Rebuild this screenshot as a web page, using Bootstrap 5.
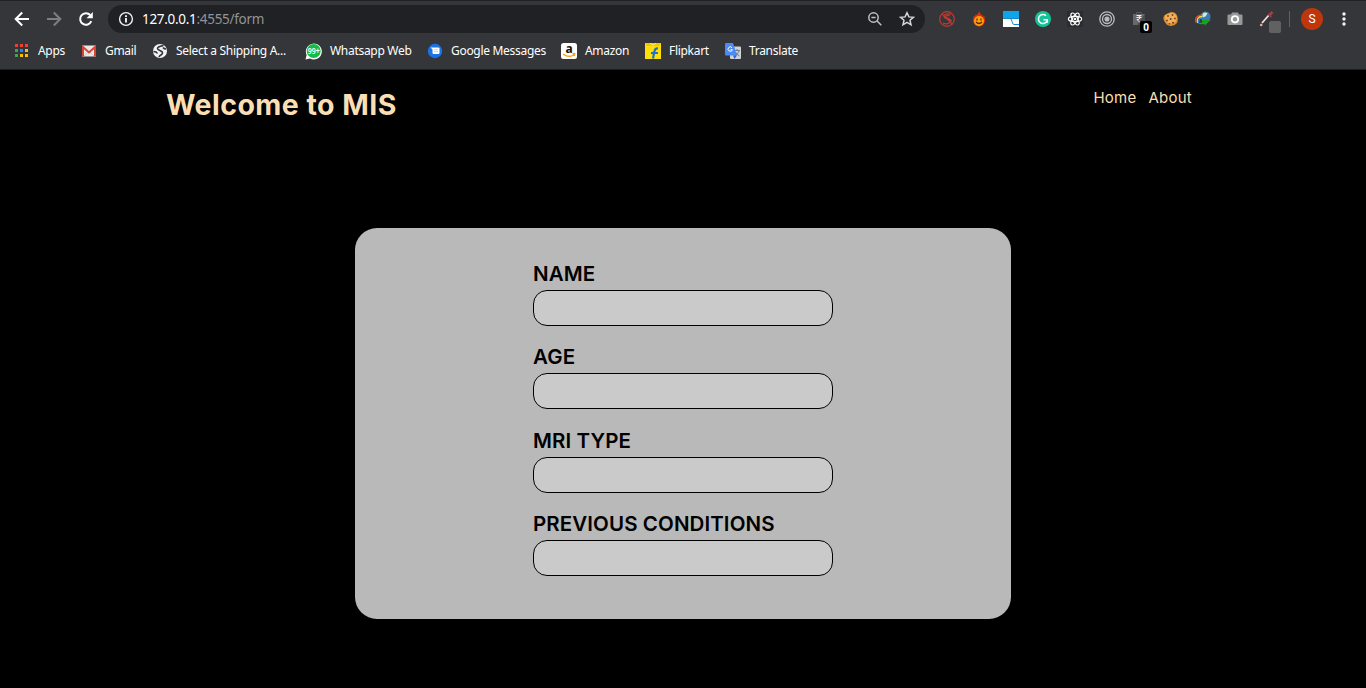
<!DOCTYPE html>
<html lang="en">
<head>
<meta charset="utf-8">
<meta name="viewport" content="width=device-width, initial-scale=1">
<title>MIS</title>
<link href="https://cdn.jsdelivr.net/npm/bootstrap@5.3.0/dist/css/bootstrap.min.css" rel="stylesheet">
<style>
  body { background: #000; height: 688px; overflow: hidden; font-family: Inter, "Liberation Sans", sans-serif; }
  svg { display: block; flex-shrink: 0; }
  .browser { height: 70px; background: #35363a; border-bottom: 1px solid #1d1e20; font-family: "Noto Sans", "Open Sans", sans-serif; }
  .toolbar { height: 37px; border-top: 1px solid #202124; padding-left: 6px; }
  .cell { width: 32px; height: 36px; display: flex; align-items: center; justify-content: center; flex-shrink: 0; position: relative; }
  .omnibox { width: 817px; height: 28px; background: #202124; border-radius: 14px; margin-left: 6px; padding-left: 10px; padding-right: 2px; }
  .url { font-size: 13.5px; letter-spacing: -.3px; color: #919497; margin-left: 8px; line-height: 20px; }
  .url span { color: #fff; }
  .extensions { margin-left: 6px; }
  .counter { position: absolute; left: 17px; top: 20px; width: 12px; height: 12px; background: #000; border-radius: 2px; color: #fff; font: bold 10px/12px "Noto Sans", sans-serif; text-align: center; }
  .divider { width: 1px; height: 16px; background: #606165; margin-left: 6px; }
  .avatar { width: 22px; height: 22px; margin-left: 11px; background: #bf360c; color: #fff; font: 12px/22px Roboto, sans-serif; text-align: center; }
  .bookmarks { display: grid; grid-template-columns: 68px 71px 153px 122px 134px 84px 80px 90px; padding-left: 13px; height: 28px; align-items: center; color: #fff; font-size: 12px; }
  .bookmarks > div { display: flex; align-items: center; gap: 8px; white-space: nowrap; }
  .bookmarks span { letter-spacing: -.3px; }
  .masthead { height: 158px; padding: 15px 174px 0 166px; color: #f9dfb3; }
  .site-title { font-size: 28.5px; font-weight: 650; line-height: 40px; margin: 0; letter-spacing: .45px; }
  .site-links { gap: 12px; line-height: 26px; font-size: 15px; letter-spacing: .25px; }
  .site-links a { color: inherit; text-decoration: none; }
  .panel { width: 656px; height: 391px; margin: 0 auto; border-radius: 22px; background: #b9b9b9; padding-top: 30px; }
  .field { width: 300px; height: 83.4px; margin: 0 auto; }
  .field label { display: block; height: 32px; line-height: 31px; font-size: 20.5px; letter-spacing: .1px; font-weight: 600; color: #000; white-space: nowrap; }
  .field input { width: 300px; height: 36px; display: block; border: 1px solid #000; border-radius: 14px; background: #cacaca; padding: 0 12px; }
</style>
</head>
<body>
<header class="browser">
  <div class="toolbar d-flex align-items-center">
    <div class="cell"><svg width="16" height="16" viewBox="0 0 16 16" fill="none" stroke="#fff" stroke-width="2"><path d="M15 8H2M8.2 1.5 1.7 8l6.5 6.5"/></svg></div>
    <div class="cell"><svg width="16" height="16" viewBox="0 0 16 16" fill="none" stroke="#7d7e81" stroke-width="2"><path d="M1 8h13M7.8 1.5 14.3 8l-6.5 6.5"/></svg></div>
    <div class="cell"><svg width="16" height="16" viewBox="0 0 16 16"><path d="M13.3 10.2A5.8 5.8 0 1 1 12.2 4" fill="none" stroke="#fff" stroke-width="2"/><path d="M14.8 1v6.3H8.5z" fill="#fff"/></svg></div>
    <div class="omnibox d-flex align-items-center">
      <svg width="16" height="16" viewBox="0 0 16 16"><circle cx="8" cy="8" r="6.4" fill="none" stroke="#f1f3f4" stroke-width="1.4"/><path d="M8 7v4.5M8 4.3v1.8" stroke="#fff" stroke-width="1.8"/></svg>
      <div class="url"><span>127.0.0.1</span>:4555/form</div>
      <div class="cell ms-auto"><svg width="16" height="16" viewBox="0 0 16 16" fill="none" stroke="#bdc1c6" stroke-width="1.5"><circle cx="6.5" cy="6.5" r="4.7"/><path d="M4.4 6.500h4.200M9.800 9.800l4.500 4.500"/></svg></div>
      <div class="cell"><svg width="16" height="16" viewBox="0 0 16 16"><path d="m8 1.800 1.900 4.100 4.500.4-3.400 3 1 4.500-4-2.400-4 2.400 1-4.500-3.400-3 4.500-.4z" fill="none" stroke="#d5d7da" stroke-width="1.500"/></svg></div>
    </div>
    <div class="extensions d-flex">
      <div class="cell"><svg width="16" height="16" viewBox="0 0 16 16" fill="none" stroke="#bd3b30" stroke-width="1.200"><circle cx="8" cy="8" r="7.300"/><path d="M12 3.500C8 2 4.500 3.500 5 6c.4 2 5.700 2 6 4.300.3 2.500-4 3.200-7 1.700M10.500 5C8.500 4 6.500 4.500 6.700 5.700c.2 1.500 5.800 2 5.800 4.800M3 2.800l10.500 10.500"/></svg></div>
      <div class="cell"><svg width="16" height="16" viewBox="0 0 16 16"><path d="M8 0c-.3 2-1 2.600-2 4L4.700 3.200 4 5.500 2.700 5 2 9c0 4 3 6.500 6 6.500s6-2.500 6-6.500l-.7-4-1.400.7-.7-2.500L10 4.500C10 2.500 8.800 1.800 8 0" fill="#e53009"/><ellipse cx="8" cy="10" rx="5" ry="5" fill="#ff9d0a"/><path d="M6 7.500v2M10 7.500v2M5 11q3 3 6 0" fill="none" stroke="#542000" stroke-width="1.200"/></svg></div>
      <div class="cell"><svg width="16" height="16" viewBox="0 0 16 16"><path fill="#0da4ea" d="M0 0h16v16H0z"/><path fill="#fff" d="M0 7h16v9H0z"/><path d="M0 7.500h16M7 7.500q1.500 0 2 3t2 3h5" fill="none" stroke="#138bcb"/></svg></div>
      <div class="cell"><svg width="16" height="16" viewBox="0 0 16 16"><circle cx="8" cy="8" r="8" fill="#15c39a"/><path d="M11 4.700A4.500 4.500 0 1 0 12 10M8.500 8.700h3.800v3" fill="none" stroke="#fff" stroke-width="1.500"/></svg></div>
      <div class="cell"><svg width="16" height="16" viewBox="0 0 16 16"><path fill="#2b2c2e" d="M0 0h16v16H0z"/><g fill="none" stroke="#fff" stroke-width="1.150"><ellipse cx="8" cy="8" rx="6.700" ry="2.600"/><ellipse cx="8" cy="8" rx="6.700" ry="2.600" transform="rotate(60 8 8)"/><ellipse cx="8" cy="8" rx="6.700" ry="2.600" transform="rotate(120 8 8)"/></g><circle cx="8" cy="8" r="1.300" fill="#fff"/></svg></div>
      <div class="cell"><svg width="16" height="16" viewBox="0 0 16 16" fill="none" stroke="#bbb" stroke-width="1.300"><circle cx="8" cy="8" r="7.200"/><circle cx="8" cy="8" r="4.500"/><circle cx="8" cy="8" r="1.900" fill="#bbb"/></svg></div>
      <div class="cell"><svg width="16" height="16" viewBox="0 0 16 16"><path d="M5.500 3V1.500h5V3" fill="none" stroke="#555"/><path fill="#686868" d="M2 3h12v11H2z"/><path d="M14 3v11H6z" fill="#4b4b4b"/><path d="M5.500 4.500h5M5.500 6.500h5M7 4.500q3 .5 2 2.500t-3 1.500l3 3" fill="none" stroke="#eee"/></svg><span class="counter">0</span></div>
      <div class="cell"><svg width="16" height="16" viewBox="0 0 16 16"><path d="M8 1q5 0 6.200 4T14 12q-2.500 3.200-6.500 3T1.200 10 3 3.200 8 1" fill="#dc8d32"/><path d="M8 2q4 0 5.300 3t-.6 5.500T7 12.500 2.200 8 4 3.400 8 2" fill="#eeb05d"/><g fill="#7b3e1c"><circle cx="5" cy="5" r=".9"/><circle cx="9.500" cy="4" r=".9"/><circle cx="12" cy="7.500" r=".9"/><circle cx="7.700" cy="8" r="1"/><circle cx="4" cy="9.500" r=".9"/><circle cx="10" cy="11.700" r="1"/><circle cx="6.500" cy="12.700" r=".8"/></g></svg></div>
      <div class="cell"><svg width="16" height="16" viewBox="0 0 16 16"><circle cx="10.500" cy="5.500" r="5" fill="#3d78bd"/><path d="M7.500 3q2.500-2.500 5-.5l-2 3-3 1z" fill="#dcecae"/><path d="M7 4C2 4-.5 7.500 1 11.500" fill="none" stroke="#e6452a" stroke-width="1.300"/><path d="M7 5.500C3 5.500 1.500 8.500 2.500 12" fill="none" stroke="#ffda32" stroke-width="1.300"/><path d="M7.500 7C4.500 7 3 9 3.800 12" fill="none" stroke="#348be0" stroke-width="1.200"/><path d="m16 8.500-6 6-.8-1.500Q5 14 2.500 12q4 .5 5-1.500L6.500 9z" fill="#11a522"/></svg></div>
      <div class="cell"><svg width="16" height="16" viewBox="0 0 16 16"><path d="M1.500 3.500H4l1-2h6l1 2h2.500q1 0 1 1V13q0 1-1 1h-13q-1 0-1-1V4.500q0-1 1-1" fill="#989898"/><circle cx="8" cy="8.300" r="3.200" fill="none" stroke="#fff" stroke-width="1.800"/></svg></div>
      <div class="cell"><svg width="16" height="16" viewBox="0 0 16 16"><path d="m3 12 7-8" stroke="#f3dddd" stroke-width="1.800"/><path d="m9 3 3.500 3" stroke="#9e3838" stroke-width="1.700"/><path d="m10.500 4 3-3" stroke="#a14343" stroke-width="2.600"/><circle cx="2.200" cy="14" r="1.300" fill="#e9a9a3"/></svg><svg class="position-absolute" style="left:18px;top:20px" width="12" height="12"><rect width="12" height="12" rx="2" fill="#616161"/></svg></div>
    </div>
    <div class="divider"></div>
    <div class="avatar rounded-circle">S</div>
    <svg class="ms-auto me-4" width="4" height="16" viewBox="0 0 4 16" fill="#f1f3f4" style="transform:translateX(4px)"><circle cx="2" cy="3" r="1.700"/><circle cx="2" cy="8" r="1.700"/><circle cx="2" cy="13" r="1.700"/></svg>
  </div>
  <div class="bookmarks">
    <div><svg width="17" height="16" viewBox="0 0 17 16"><path fill="#f33f32" d="M2 1h3v3H2zM7 1h3v3H7zM12 1h3v3h-3z"/><path fill="#3aa657" d="M2 6h3v3H2zM2 11h3v3H2z"/><path fill="#2186f3" d="M7 6h3v3H7z"/><path fill="#fbbc05" d="M12 6h3v3h-3zM7 11h3v3H7zM12 11h3v3h-3z"/></svg><span>Apps</span></div>
    <div><svg width="16" height="16" viewBox="0 0 16 16"><path fill="#e8e8e8" d="M1 2.500h14v11H1z"/><path d="m3 13 5-5 5 5" fill="none" stroke="#ccc"/><path d="M2 13.500V4l6 5.500L14 4v9.500" fill="none" stroke="#d94435" stroke-width="2"/></svg><span>Gmail</span></div>
    <div><svg width="16" height="16" viewBox="0 0 16 16"><circle cx="8" cy="8" r="7" fill="#f1f3f4"/><path d="M11.500 2.500C9 3 5.500 3.500 5.500 5.500S11 7.500 10.500 10 7.500 12 7 14M1.500 8.500q3 0 4 2M11 4.500q1 1.500 3 1.500" fill="none" stroke="#35363a" stroke-width="1.600"/></svg><span>Select a Shipping A...</span></div>
    <div><svg width="17" height="17" viewBox="0 0 17 17"><path d="M.5 16.500 1.600 12A8 8 0 1 1 5 15.600z" fill="#fff"/><circle cx="8.700" cy="8" r="7" fill="#13bd47"/><text x="8.700" y="11.200" text-anchor="middle" textLength="12" lengthAdjust="spacingAndGlyphs" font-size="8.500" font-weight="600" font-family="Noto Sans" fill="#fff">99+</text></svg><span>Whatsapp Web</span></div>
    <div><svg width="16" height="16" viewBox="0 0 16 16"><circle cx="8" cy="8" r="7.200" fill="#1a73e8"/><path d="M3.500 4.500h8q1 0 1 1V10q0 1-1 1h-5q-1 0-1-1V6.500z" fill="#fff"/><path d="M7 6.700h4M7 8.700h4" stroke="#a8c9f8" stroke-width=".8"/></svg><span>Google Messages</span></div>
    <div><svg width="16" height="16" viewBox="0 0 16 16" overflow="visible"><rect width="16" height="16" rx="2.500" fill="#fff"/><text x="8" y="9.500" text-anchor="middle" font-family="Noto Sans" font-size="12" font-weight="700" fill="#111">a</text><path d="M2 11q6 4.500 11 .8M11.500 10.700h2.300q.2 1.500-.8 2.500" fill="none" stroke="#ff9900" stroke-width="1.200"/></svg><span>Amazon</span></div>
    <div><svg width="16" height="16" viewBox="0 0 16 16"><path fill="#ffdf09" d="M0 0h16v16H0z"/><path fill="#f3c500" d="M0 0h16l-2 3H2z"/><path d="M5 0q3 4 6 0" fill="none" stroke="#fff176"/><path d="M13 5.500q-3-.5-3.500 2.500L8 15.500M6 10h7" fill="none" stroke="#1b72d3" stroke-width="2.200"/></svg><span>Flipkart</span></div>
    <div><svg width="16" height="16" viewBox="0 0 16 16"><rect x="5" y="3.500" width="11" height="12.500" rx="1" fill="#d0d2d6"/><path d="M9.500 7.500H15M12 6v1.500M14 8q-1 3-4 5M10.500 9q1 2.500 4 4" fill="none" stroke="#6e8090"/><path d="M1 0h7l4 12.500H1q-1 0-1-1V1q0-1 1-1" fill="#4c8bf5"/><path d="m8 12.500h4L9.500 16z" fill="#3266c7"/><path d="M7 4.700a2.200 2.200 0 1 0 .4 2H5.500" fill="none" stroke="#fff"/></svg><span>Translate</span></div>
  </div>
</header>
<div class="masthead d-flex justify-content-between align-items-start">
  <h1 class="site-title">Welcome to MIS</h1>
  <nav class="site-links d-flex"><a href="#">Home</a><a href="#">About</a></nav>
</div>
<main class="panel">
  <form>
    <div class="field"><label for="name">NAME</label><input id="name" type="text"></div>
    <div class="field"><label for="age">AGE</label><input id="age" type="text"></div>
    <div class="field"><label for="mri">MRI TYPE</label><input id="mri" type="text"></div>
    <div class="field"><label for="prev">PREVIOUS CONDITIONS</label><input id="prev" type="text"></div>
  </form>
</main>
<script src="https://cdn.jsdelivr.net/npm/bootstrap@5.3.0/dist/js/bootstrap.bundle.min.js"></script>
</body>
</html>
